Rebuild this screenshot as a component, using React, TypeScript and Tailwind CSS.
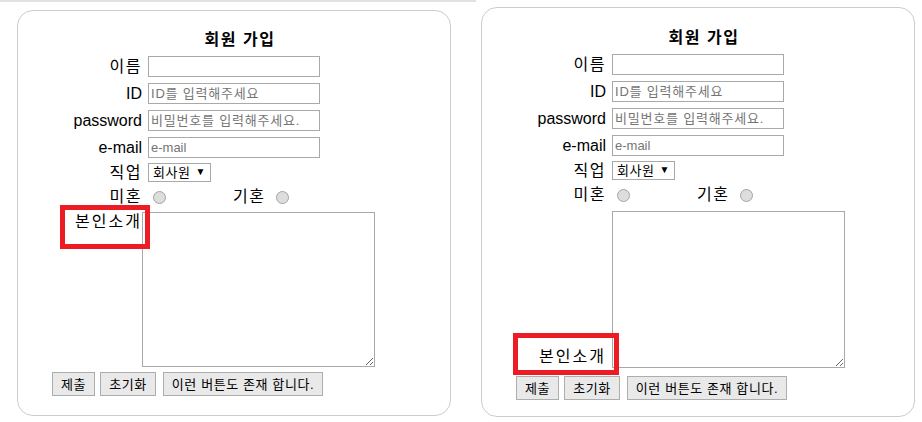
import React from "react";

const font = "font-['Liberation_Sans','Noto_Sans_CJK_KR',sans-serif]";

function Field({ label, placeholder }: { label: string; placeholder?: string }) {
  const korean = /[가-힣]/.test(label);
  const krHolder = placeholder ? /[가-힣]/.test(placeholder) : false;
  return (
    <div className="mt-[6px] flex h-[21px] items-center">
      <span className={`w-[124px] text-right text-[16px] leading-[20px] ${korean ? "tracking-[1.5px]" : ""}`}>{label}</span>
      <input
        className={`ml-[6px] h-[21px] w-[172px] border border-[#a9a9a9] bg-white px-[2px] text-[13px] leading-[17px] outline-none placeholder:text-[#757575] ${krHolder ? "tracking-[0.8px]" : ""}`}
        placeholder={placeholder}
      />
    </div>
  );
}

function Radio() {
  return <span className="inline-block h-[13px] w-[13px] rounded-full border border-[#a3a3a3] bg-[#dddddd]" />;
}

const btn = "h-[24px] border border-[#adadad] bg-[#e9e9e9] px-[8px] text-[13px] leading-[17px] tracking-[0.6px]";

function SignupForm({ labelBottom }: { labelBottom?: boolean }) {
  return (
    <div className="relative flex flex-col">
      <h2 className={`${labelBottom ? "mt-[20px]" : "mt-[19px]"} h-[20px] pl-[12px] text-center text-[16px] font-bold leading-[20px] tracking-[1.5px]`}>
        회원 가입
      </h2>
      <Field label="이름" />
      <Field label="ID" placeholder="ID를 입력해주세요" />
      <Field label="password" placeholder="비밀번호를 입력해주세요." />
      <Field label="e-mail" placeholder="e-mail" />

      <div className="mt-[5px] flex h-[19px] items-center">
        <span className="w-[124px] text-right text-[16px] leading-[20px] tracking-[1.5px]">직업</span>
        <div className="ml-[6px] flex h-[19px] w-[63px] items-center border border-[#a9a9a9] pl-[4px] text-[13px] leading-[17px] tracking-[0.5px]">
          회사원
          <span className="ml-[5px] -mt-[3px] text-[10px]">▼</span>
        </div>
      </div>

      <div className="mt-[6px] flex h-[18px] items-center">
        <span className="w-[124px] text-right text-[16px] leading-[20px] tracking-[1.5px]">미혼</span>
        <span className="ml-[11px] flex">
          <Radio />
        </span>
        <span className="ml-[67px] text-[16px] leading-[20px] tracking-[1.5px]">기혼</span>
        <span className="ml-[11px] flex">
          <Radio />
        </span>
      </div>

      {labelBottom ? (
        <div className="mt-[7px] flex items-end">
          <span className="w-[124px] pb-[1px] text-right text-[16px] leading-[20px] tracking-[2px]">본인소개</span>
          <textarea className="ml-[6px] h-[157px] w-[233px] resize border border-[#a9a9a9] outline-none" />
        </div>
      ) : (
        <div className="mt-[6px] flex items-start">
          <span className="w-[124px] text-right text-[16px] leading-[20px] tracking-[2px]">본인소개</span>
          <textarea className="h-[155px] w-[233px] resize border border-[#a9a9a9] outline-none" />
        </div>
      )}

      <div className={`${labelBottom ? "mt-[8px]" : "mt-[5px]"} ml-[34px] flex gap-[5px]`}>
        <button className={btn}>제출</button>
        <button className={btn}>초기화</button>
        <button className={`ml-[2px] ${btn}`}>이런 버튼도 존재 합니다.</button>
      </div>

      {labelBottom ? (
        <div className="absolute left-[31px] top-[325px] h-[42px] w-[106px] border-[5px] border-[#ed1c24]" />
      ) : (
        <div className="absolute left-[42px] top-[194px] h-[44px] w-[90px] border-[5px] border-[#ed1c24]" />
      )}
    </div>
  );
}

export default function App() {
  return (
    <div className={`flex h-[422px] w-[922px] bg-white text-black ${font}`}>
      <div className="w-[476px] border-t-2 border-[#e1e1e1]">
        <div className="ml-[17px] mt-[8px] h-[406px] w-[434px] rounded-[16px] border border-[#cccccc]">
          <SignupForm />
        </div>
      </div>
      <div className="flex-1">
        <div className="ml-[5px] mt-[7px] h-[410px] w-[434px] rounded-[16px] border border-[#cccccc]">
          <SignupForm labelBottom />
        </div>
      </div>
    </div>
  );
}
